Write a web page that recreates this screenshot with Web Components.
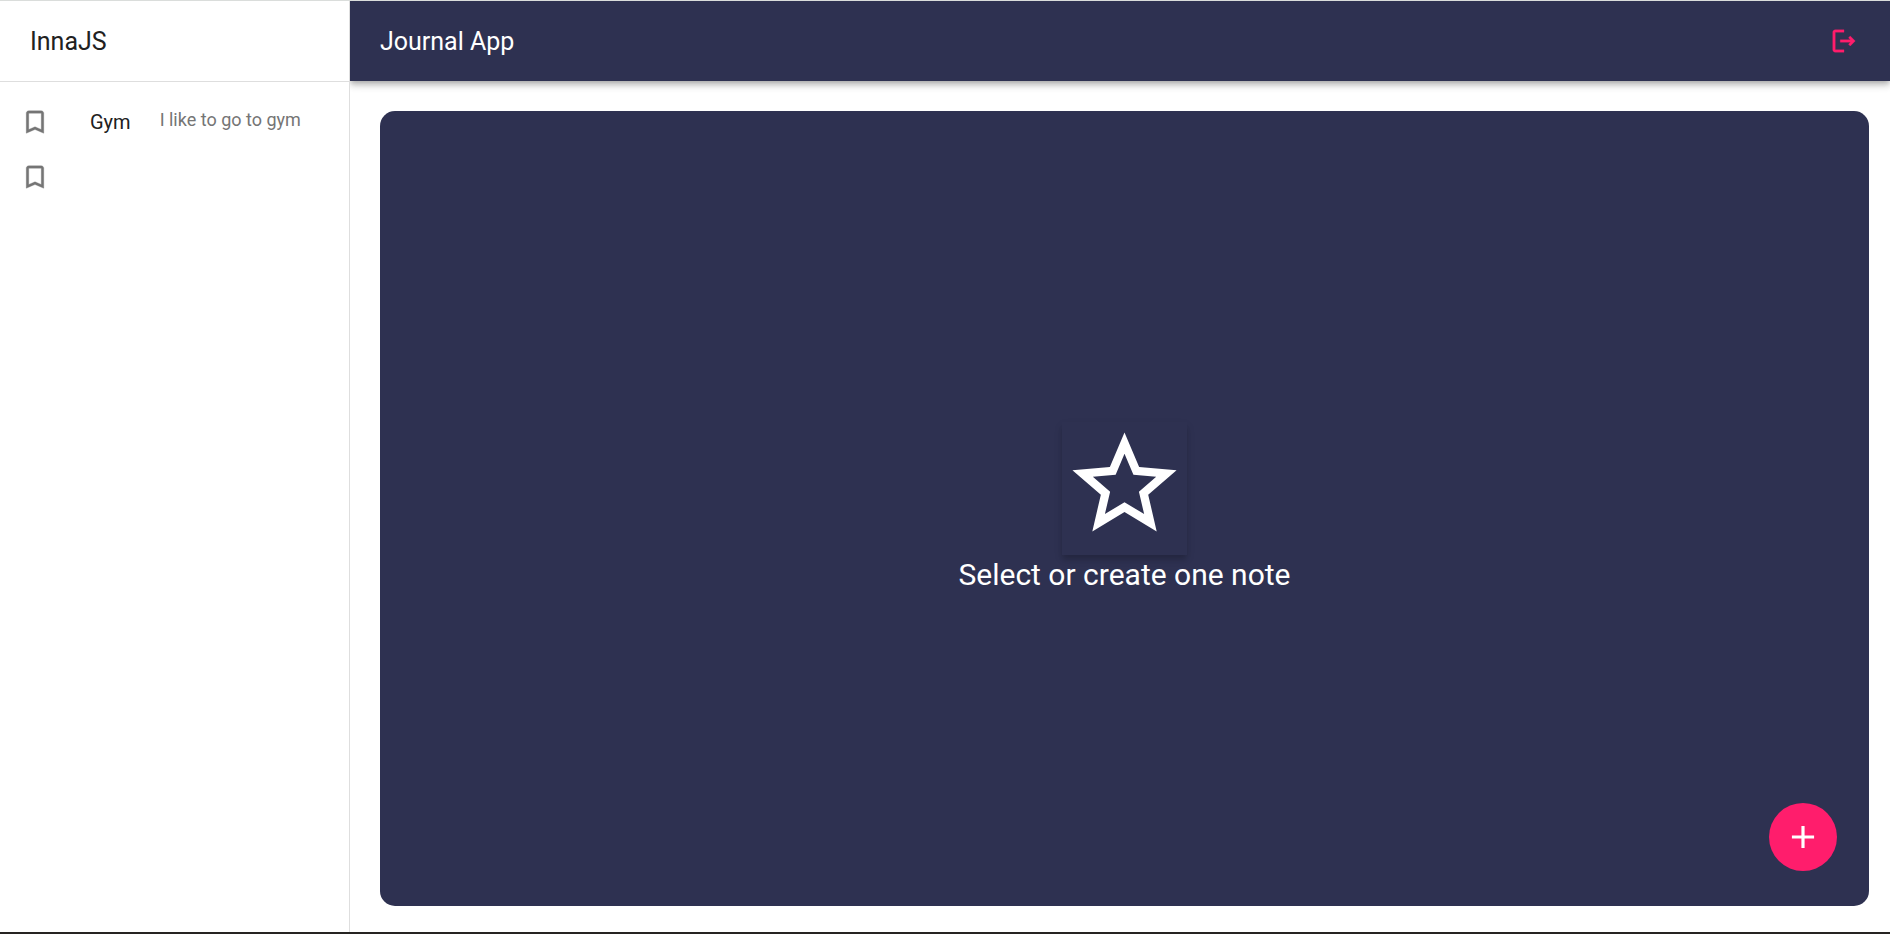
<!DOCTYPE html>
<html lang="en">
<head>
<meta charset="utf-8">
<meta name="viewport" content="width=device-width, initial-scale=1">
<title>Journal App</title>
<style>
  html, body { margin: 0; }
  body {
    --primary: #2e3151;
    --accent: #ff1d6c;
    --divider: #dedede;
    --text: #212121;
    --muted: #757575;
    background: #fff;
    color: var(--text);
    font-family: Roboto, "Liberation Sans", sans-serif;
  }
</style>
</head>
<body>
<journal-app></journal-app>

<template id="journal-app">
  <style>
    :host {
      box-sizing: border-box;
      display: flex;
      min-height: 100vh;
      border-top: 1px solid #dadddb;
      border-bottom: 2px solid #262422;
    }
    journal-sidebar { flex: 0 0 349px; }
    .content { flex: 1; min-width: 0; display: flex; flex-direction: column; }
    main { flex: 1; display: flex; padding: 30px 21px 26px 30px; }
    nothing-selected { flex: 1; }
    add-note { position: fixed; right: 53px; bottom: 63px; }
  </style>
  <journal-sidebar>
    <span slot="user">InnaJS</span>
    <note-item>Gym<span slot="body">I like to go to gym</span></note-item>
    <note-item></note-item>
  </journal-sidebar>
  <div class="content">
    <journal-navbar>Journal App</journal-navbar>
    <main><nothing-selected>Select or create one note</nothing-selected></main>
  </div>
  <add-note></add-note>
</template>

<template id="journal-sidebar">
  <style>
    :host { display: block; border-right: 1px solid var(--divider); }
    header {
      display: flex; align-items: center;
      height: 80px; padding: 0 30px;
      border-bottom: 1px solid var(--divider);
    }
    h2 { margin: 0; padding-top: 2px; font-size: 25px; line-height: 40px; font-weight: 400; }
    .list { display: block; padding: 10px 0; }
  </style>
  <header><h2><slot name="user"></slot></h2></header>
  <nav class="list" aria-label="Notes"><slot></slot></nav>
</template>

<template id="note-item">
  <style>
    :host { display: block; }
    button {
      display: flex; align-items: center;
      width: 100%; min-height: 50px; padding: 5px 20px;
      border: 0; background: none; color: inherit;
      font: inherit; text-align: left; cursor: pointer;
    }
    svg {
      flex: none; width: 30px; height: 30px; margin-right: 40px;
      fill: var(--muted); stroke: var(--muted); stroke-width: .25;
    }
    .row { display: flex; gap: 29px; }
    .title { font-size: 20px; line-height: 30px; padding: 10px 0; }
    .body { font-size: 18px; line-height: 26px; padding: 10px 0; color: var(--muted); }
    :host(:empty) .row { display: none; }
  </style>
  <button type="button" aria-label="Open note">
    <svg viewBox="0 0 24 24" aria-hidden="true"><path d="M17 3H7c-1.1 0-1.99.9-1.99 2L5 21l7-3 7 3V5c0-1.1-.9-2-2-2zm0 15l-5-2.18L7 18V5h10v13z"/></svg>
    <span class="row"><span class="title"><slot></slot></span><span class="body"><slot name="body"></slot></span></span>
  </button>
</template>

<template id="journal-navbar">
  <style>
    :host {
      display: flex; align-items: center; justify-content: space-between;
      height: 80px; padding: 0 21px 0 30px;
      background: var(--primary); color: #fff;
      box-shadow: 0 2px 5px -1px rgba(0,0,0,.2), 0 5px 6px rgba(0,0,0,.14), 0 1px 12px rgba(0,0,0,.12);
      clip-path: inset(0 0 -30px 0);
    }
    h1 { margin: 0; padding-top: 2px; font-size: 25px; line-height: 40px; font-weight: 400; }
    button { display: flex; padding: 10px; border: 0; border-radius: 50%; background: none; cursor: pointer; }
    svg { width: 30px; height: 30px; fill: var(--accent); stroke: var(--accent); stroke-width: .25; }
  </style>
  <h1><slot></slot></h1>
  <button type="button" aria-label="Log out">
    <svg viewBox="0 0 24 24" aria-hidden="true"><path d="M17 8l-1.41 1.41L17.17 11H9v2h8.17l-1.58 1.58L17 16l4-4-4-4zM5 5h7V3H5c-1.1 0-2 .9-2 2v14c0 1.1.9 2 2 2h7v-2H5V5z"/></svg>
  </button>
</template>

<template id="nothing-selected">
  <style>
    :host {
      display: flex; flex-direction: column; align-items: center; justify-content: center;
      border-radius: 15px; background: var(--primary); color: #fff;
    }
    .icon {
      padding-bottom: 8px;
      box-shadow: 0 5px 5px -1px rgba(0,0,0,.12), 0 4px 8px rgba(0,0,0,.12);
    }
    svg { display: block; width: 125px; height: 125px; fill: #fff; }
    p { margin: 0; font-size: 30px; line-height: 40px; }
  </style>
  <div class="icon">
    <svg viewBox="0 0 24 24" aria-hidden="true"><path d="M22 9.24l-7.19-.62L12 2 9.19 8.63 2 9.24l5.46 4.73L5.82 21 12 17.27 18.18 21l-1.63-7.03L22 9.24zM12 15.4l-3.76 2.27 1-4.28-3.32-2.88 4.38-.38L12 6.1l1.71 4.04 4.38.38-3.32 2.88 1 4.28L12 15.4z"/></svg>
  </div>
  <p><slot></slot></p>
</template>

<template id="add-note">
  <style>
    :host { display: block; }
    button {
      display: flex; padding: 15px; border: 0; border-radius: 50%;
      background: var(--accent); cursor: pointer;
    }
    svg { width: 38px; height: 38px; fill: #fff; }
  </style>
  <button type="button" aria-label="New note">
    <svg viewBox="0 0 24 24" aria-hidden="true"><path d="M19 13h-6v6h-2v-6H5v-2h6V5h2v6h6v2z"/></svg>
  </button>
</template>

<script>
  for (const name of ["journal-app", "journal-sidebar", "note-item", "journal-navbar", "nothing-selected", "add-note"]) {
    customElements.define(name, class extends HTMLElement {
      constructor() {
        super();
        this.attachShadow({ mode: "open" })
          .append(document.getElementById(name).content.cloneNode(true));
      }
    });
  }
</script>
</body>
</html>
